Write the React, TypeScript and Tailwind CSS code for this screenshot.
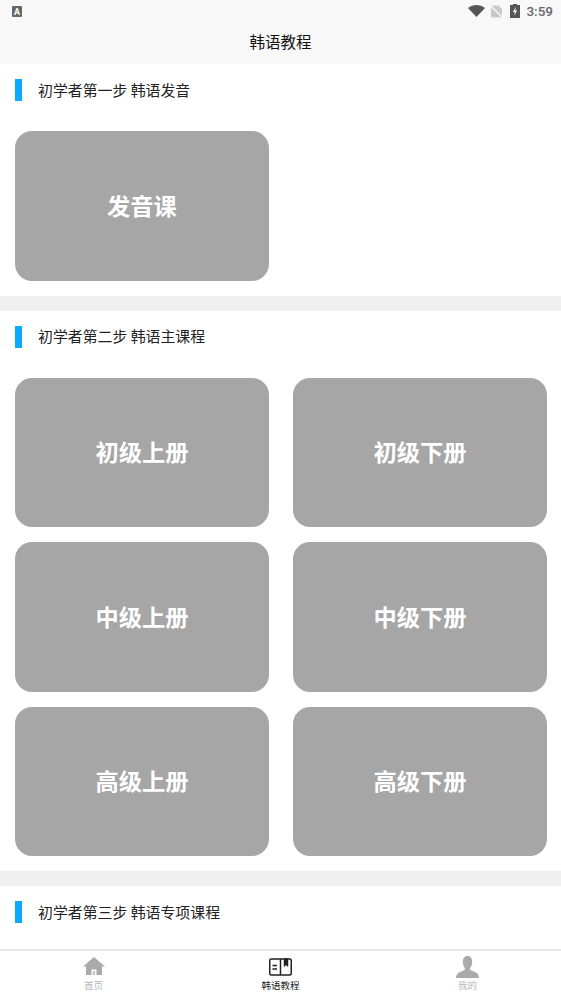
const font = { fontFamily: '"Noto Sans CJK SC", sans-serif' };

function Heading({ text }: { text: string }) {
  return (
    <div className="flex h-[52px] items-center pl-[15px]">
      <span className="h-[22px] w-[7px] bg-[#0aaaff]" />
      <span className="ml-4 text-[14.9px] leading-none text-[#222]">{text}</span>
    </div>
  );
}

function Card({ title }: { title: string }) {
  return (
    <div className="flex h-[149.5px] w-[254px] items-center justify-center rounded-[17px] bg-[#a6a6a6] pb-px text-[23.25px] font-bold text-white">
      <span>{title}</span>
    </div>
  );
}

function Divider() {
  return <div className="h-[15px] bg-[#f0f0f0]" />;
}

export default function App() {
  return (
    <div className="flex h-[997px] w-[561px] flex-col overflow-hidden bg-white" style={font}>
      {/* status bar */}
      <div className="flex h-[24px] items-center justify-between bg-[#f8f8f8] pb-[2px] pl-3 pr-2">
        <span className="flex h-[11px] w-[10px] items-end justify-center rounded-[1px] bg-[#666] text-[9px] font-bold leading-none text-white" style={{ fontFamily: "Roboto, sans-serif" }}>A</span>
        <div className="flex items-center">
          <svg width="17" height="12" viewBox="0 0 17 12" className="mr-[5px]">
            <path d="M0 3 C4.8 -1 12.2 -1 17 3 L8.5 12 Z" fill="#555" />
          </svg>
          <svg width="13" height="13" viewBox="0 0 13 13" className="mr-[7px]">
            <path d="M1 0.5 H8.5 L12 4 V12.5 H1 Z" fill="#c8c8c8" />
            <path d="M0 0 L13 13" stroke="#f8f8f8" strokeWidth="1.4" />
          </svg>
          <svg width="10" height="14" viewBox="0 0 10 14" className="mr-[6px]">
            <path d="M3 0 H7 V1 H10 V14 H0 V1 H3 Z" fill="#555" />
            <path d="M5.8 3 L2.8 8 H4.7 L4.2 11.5 L7.2 6.5 H5.3 Z" fill="#f8f8f8" />
          </svg>
          <span className="mt-[2px] text-[13.5px] font-medium leading-none text-[#666]" style={{ fontFamily: "Roboto, sans-serif" }}>3:59</span>
        </div>
      </div>

      {/* title bar */}
      <div className="flex h-[40px] items-center justify-center bg-[#f8f8f8] pb-[5px] text-[15.5px] text-[#111]">韩语教程</div>

      <div className="flex-1 overflow-hidden">
        <Heading text="初学者第一步 韩语发音" />
        <div className="p-[15px]">
          <Card title="发音课" />
        </div>
        <Divider />

        <Heading text="初学者第二步 韩语主课程" />
        <div className="grid grid-cols-[254px_254px] justify-between gap-y-[15px] pb-[15px] pl-[15px] pr-[14px] pt-[15px]">
          <Card title="初级上册" />
          <Card title="初级下册" />
          <Card title="中级上册" />
          <Card title="中级下册" />
          <Card title="高级上册" />
          <Card title="高级下册" />
        </div>
        <Divider />

        <Heading text="初学者第三步 韩语专项课程" />
      </div>

      {/* bottom tabs */}
      <div className="flex h-[48px] items-start border-t-2 border-[#e8e8e8] bg-white">
        <div className="flex w-[187px] flex-col items-center pt-[6px]">
          <svg width="22" height="18" viewBox="0 0 22 18" fill="#aaaaaa">
            <path d="M11 0 L22 9.5 H19 V18 H13.5 V12.5 H8.5 V18 H3 V9.5 H0 Z" />
            <path d="M9.8 14 H12.2 V18 H9.8 Z" opacity="0.7" />
          </svg>
          <span className="mt-[4px] text-[9.5px] leading-[12px] text-[#b8b8b8]">首页</span>
        </div>
        <div className="flex w-[187px] flex-col items-center pt-[7px]">
          <svg width="23" height="18" viewBox="0 0 23 18" fill="none" stroke="#222" strokeWidth="1.5">
            <rect x="0.75" y="1" width="21.5" height="16" rx="1.5" />
            <path d="M11.5 1 V17" />
            <path d="M3.5 7.5 H8 M3.5 11 H8" strokeWidth="1.3" />
            <path d="M15 0.5 H19 V8.5 L17 7 L15 8.5 Z" fill="#222" strokeWidth="0.5" />
          </svg>
          <span className="mt-[3px] text-[9.5px] leading-[12px] text-[#222]">韩语教程</span>
        </div>
        <div className="flex w-[187px] flex-col items-center pt-[5px]">
          <svg width="23" height="22" viewBox="0 0 23 22" fill="#aaaaaa">
            <path d="M11.5 0 C14.8 0 16.2 2.6 16.2 6 C16.2 9 15 11 14 12.2 C14 13.6 14.5 14.2 16 14.8 C19 16 23 17 23 22 H0 C0 17 4 16 7 14.8 C8.5 14.2 9 13.6 9 12.2 C8 11 6.8 9 6.8 6 C6.8 2.6 8.2 0 11.5 0 Z" />
          </svg>
          <span className="mt-[1px] text-[9.5px] leading-[12px] text-[#b8b8b8]">我的</span>
        </div>
      </div>
    </div>
  );
}
